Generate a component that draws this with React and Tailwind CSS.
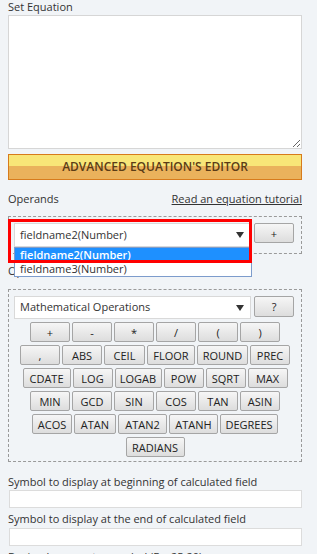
import React from 'react';

// rows of the operations keypad — widths measured off the reference
const KEYS = [
    [['+', 'w-[40px]'], ['-', 'w-[40px]'], ['*', 'w-[40px]'], ['/', 'w-[40px]'], ['(', 'w-[40px]'], [')', 'w-[40px]']],
    [[',', 'w-[40px]'], ['ABS', 'w-[40px]'], ['CEIL', 'w-[41px]'], ['FLOOR', 'w-[48px]'], ['ROUND', 'w-[51px]'], ['PREC', 'w-[40px]']],
    [['CDATE', 'w-[48px]'], ['LOG', 'w-[40px]'], ['LOGAB', 'w-[47px]'], ['POW', 'w-[40px]'], ['SQRT', 'w-[40px]'], ['MAX', 'w-[40px]']],
    [['MIN', 'w-[40px]'], ['GCD', 'w-[40px]'], ['SIN', 'w-[40px]'], ['COS', 'w-[40px]'], ['TAN', 'w-[40px]'], ['ASIN', 'w-[40px]']],
    [['ACOS', 'w-[40px]'], ['ATAN', 'w-[42px]'], ['ATAN2', 'w-[49px]'], ['ATANH', 'w-[49px]'], ['DEGREES', 'w-[58px]']],
    [['RADIANS', 'w-[59px]']],
];

const Arrow = () => (
    <svg width="8" height="6" viewBox="0 0 8 6" className="shrink-0">
        <polygon points="0,0 8,0 4,6" fill="#333" />
    </svg>
);

const GrayBtn = ({ children, className = '' }) => (
    <button className={`h-[20px] border border-[#a5a5a5] rounded-[2px] bg-gradient-to-b from-[#f6f6f6] to-[#dddddd] text-[11px] leading-none text-[#222] flex items-center justify-center ${className}`}>
        {children}
    </button>
);

const FakeSelect = ({ value, className = '' }) => (
    <div className={`w-[237px] bg-white border border-[#d9d9d9] flex items-center justify-between pl-[5px] pr-[6px] text-[11px] text-[#333] ${className}`}>
        <span>{value}</span>
        <Arrow />
    </div>
);

export default function App() {
    return (
        <div className="relative w-[317px] h-[554px] overflow-hidden bg-[#f1f4f7] text-[#333] text-[11px] font-['Open_Sans','Noto_Sans',sans-serif]">
            <div className="ml-2 w-[294px] flex flex-col">
                <label className="leading-[14px]">Set Equation</label>
                <textarea className="mt-[1px] h-[134px] w-full bg-white border border-[#d6d6d6] outline-none" />

                <button className="mt-[5px] h-[26px] border border-[#d77b1c] bg-[linear-gradient(#f8e678_0%,#f8e678_45%,#eab25c_45%,#eab25c_100%)] text-[12px] font-semibold text-[#5b3c16] uppercase">
                    Advanced Equation's Editor
                </button>

                {/* Operands */}
                <div className="mt-[12px] flex items-center justify-between leading-[14px]">
                    <span>Operands</span>
                    <a className="underline text-[#333] -mt-[1px]">Read an equation tutorial</a>
                </div>
                <div className="mt-[10px] h-[38px] border border-dashed border-[#9a9a9a] px-[5px] pt-[6px] flex items-start gap-[3px]">
                    <FakeSelect value="fieldname2(Number)" className="h-[24px] border-[#cfd8e3]" />
                    <GrayBtn className="w-[40px]">+</GrayBtn>
                </div>

                {/* Operators */}
                <label className="mt-[10px] leading-[14px]">Operators</label>
                <div className="mt-[11px] border border-dashed border-[#9a9a9a] px-[5px] pt-[6px] pb-[4px] flex flex-col">
                    <div className="flex items-start gap-[3px]">
                        <FakeSelect value="Mathematical Operations" className="h-[23px]" />
                        <GrayBtn className="w-[40px] h-[21px]">?</GrayBtn>
                    </div>
                    <div className="mt-[3px] flex flex-col gap-[3px]">
                        {KEYS.map((row, i) => (
                            <div key={i} className="flex justify-center gap-[2px]">
                                {row.map(([label, w]) => (
                                    <GrayBtn key={label} className={w}>{label}</GrayBtn>
                                ))}
                            </div>
                        ))}
                    </div>
                </div>

                <label className="mt-[13px] leading-[14px]">Symbol to display at beginning of calculated field</label>
                <input className="mt-[1px] ml-[1px] h-[18px] bg-white border border-[#dcdcdc] outline-none" />
                <label className="mt-[4px] leading-[14px]">Symbol to display at the end of calculated field</label>
                <input className="mt-[2px] ml-[1px] h-[18px] bg-white border border-[#dcdcdc] outline-none" />
                <label className="mt-[4px] leading-[14px]">Decimals separator symbol (Ex: 25.20)</label>
            </div>

            {/* open dropdown list */}
            <div className="absolute left-[14px] top-[247px] w-[238px] h-[30px] bg-white border border-[#7d9ccc] flex flex-col text-[11px]">
                <div className="h-[15px] bg-[#1e90ff] text-white font-semibold pl-[5px] leading-[14px]">fieldname2(Number)</div>
                <div className="h-[14px] pl-[5px] leading-[13px] text-[#333]">fieldname3(Number)</div>
            </div>

            {/* red highlight frame */}
            <div className="absolute left-2 top-[219px] w-[244px] h-[44px] border-[3px] border-[#ff0000]" />
        </div>
    );
}
